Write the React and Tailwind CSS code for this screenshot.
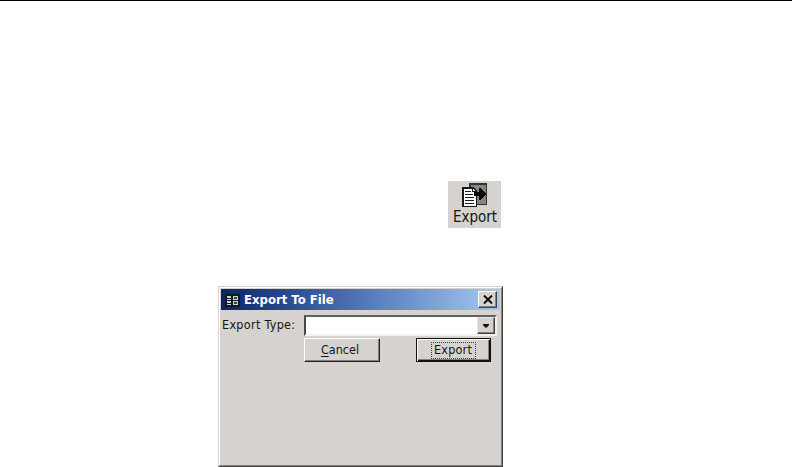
function ExportIcon() {
  return (
    <svg width="27" height="26" viewBox="0 0 27 26" className="ml-px shrink-0" shapeRendering="crispEdges" aria-hidden="true">
      <path d="M7 1h18v22H7z" fill="#333" />
      <path d="M9 3h15v19H9z" fill="#858585" />
      <path d="M0 5h11l4 4v16H0z" fill="#181818" />
      <path d="M2 7h8v3h4v14H2z" fill="#fff" />
      <path d="M11 7v2h2z" fill="#fff" />
      <path d="M3 9.5h6M3 12.5h8M3 15.5h9M3 18.5h9M3 21.5h9" stroke="#181818" fill="none" />
      <path d="M12 10h5V6h2v1h1v1h1v1h1v1h1v1h1v2h-1v1h-1v1h-1v1h-1v1h-1v1h-2v-4h-5z" fill="#080808" />
    </svg>
  )
}

function FormIcon() {
  return (
    <svg width="15" height="13" viewBox="0 0 15 13" className="relative top-px" shapeRendering="crispEdges" aria-hidden="true">
      <path d="M0 0h15v13H0z" fill="#101828" />
      <path d="M2 2h4v2H2zM2 5h4v1H2zM2 7h4v2H2zM2 10h4v1H2z" fill="#d0d0cc" />
      <path d="M8.5 2.5h4v3h-4zM8.5 7.5h4v3h-4z" fill="#3a4048" stroke="#d0d0cc" />
    </svg>
  )
}

function TitleBar() {
  return (
    <div className="flex h-[21px] items-center bg-linear-to-r from-[#0a246a] via-[#5375b8] to-[#a6caf0] pl-1 pr-[3px]">
      <FormIcon />
      <span className="ml-1 text-[13px] font-bold leading-none whitespace-nowrap text-white">
        Export To File
      </span>
      <button className="ml-auto flex h-[17px] w-[19px] items-center justify-center border border-t-white border-l-white border-r-[#404040] border-b-[#404040] bg-[#d6d3ce] shadow-[inset_-1px_-1px_0_#848280]">
        <svg width="10" height="9" viewBox="0 0 10 9" aria-hidden="true">
          <path d="M1 .5l8 8M9 .5l-8 8" stroke="#000" strokeWidth="1.8" />
        </svg>
      </button>
    </div>
  )
}

function TypeSelect() {
  return (
    <div className="flex h-[21px] w-[193px] justify-end border-2 border-t-[#606060] border-l-[#484848] border-r-[#f3f2f0] border-b-[#f3f2f0] bg-white">
      <button className="flex h-[17px] w-[18px] items-center justify-center border border-t-[#e8e6e2] border-l-[#e8e6e2] border-r-[#404040] border-b-[#404040] bg-[#d6d3ce] shadow-[inset_-1px_-1px_0_#848280]">
        <svg width="6" height="4" viewBox="0 0 6 4" aria-hidden="true">
          <path d="M0 0h6v1L4 3.5H2L0 1z" fill="#111" />
        </svg>
      </button>
    </div>
  )
}

export default function App() {
  return (
    <div className="h-[467px] w-[792px] overflow-hidden border-t border-black bg-white font-['DejaVu_Sans_Condensed','DejaVu_Sans',sans-serif] text-[#151515]">
      <div className="mt-[180px] ml-[448px] flex h-[47px] w-[53px] flex-col items-center bg-[#d6d3ce] pt-px">
        <ExportIcon />
        <span className="mt-px ml-px text-[15px] leading-[16px]">Export</span>
      </div>

      <div className="mt-[58px] ml-[218px] h-[181px] w-[285px] border border-t-[#d6d3ce] border-l-[#d6d3ce] border-r-[#404040] border-b-[#404040] bg-[#d6d3ce]">
        <div className="h-full border border-t-white border-l-white border-r-[#848280] border-b-[#848280] p-px">
          <TitleBar />
          <div className="mt-[5px] flex items-center pl-px">
            <label className="w-[82px] pb-px text-[12.5px] leading-none tracking-[0.3px] whitespace-nowrap">Export Type:</label>
            <TypeSelect />
          </div>
          <div className="mt-[2px] flex pl-[83px] text-[12.5px]">
            <button className="h-6 w-[76px] border border-t-white border-l-white border-r-[#202020] border-b-[#202020] bg-[#d6d3ce] pr-1 leading-none shadow-[inset_-1px_-1px_0_#848280]">
              <span className="underline underline-offset-2">C</span>ancel
            </button>
            <button className="ml-9 flex h-6 w-[75px] items-center justify-center border border-[#101010] bg-[#d6d3ce] shadow-[inset_1px_1px_0_#fff,inset_-1px_-1px_0_#101010,inset_-2px_-2px_0_#848280]">
              <span className="flex h-[17px] w-[45px] items-center justify-center border border-dotted border-[#404040] pr-px leading-none tracking-[0.2px]">
                Export
              </span>
            </button>
          </div>
        </div>
      </div>
    </div>
  )
}
